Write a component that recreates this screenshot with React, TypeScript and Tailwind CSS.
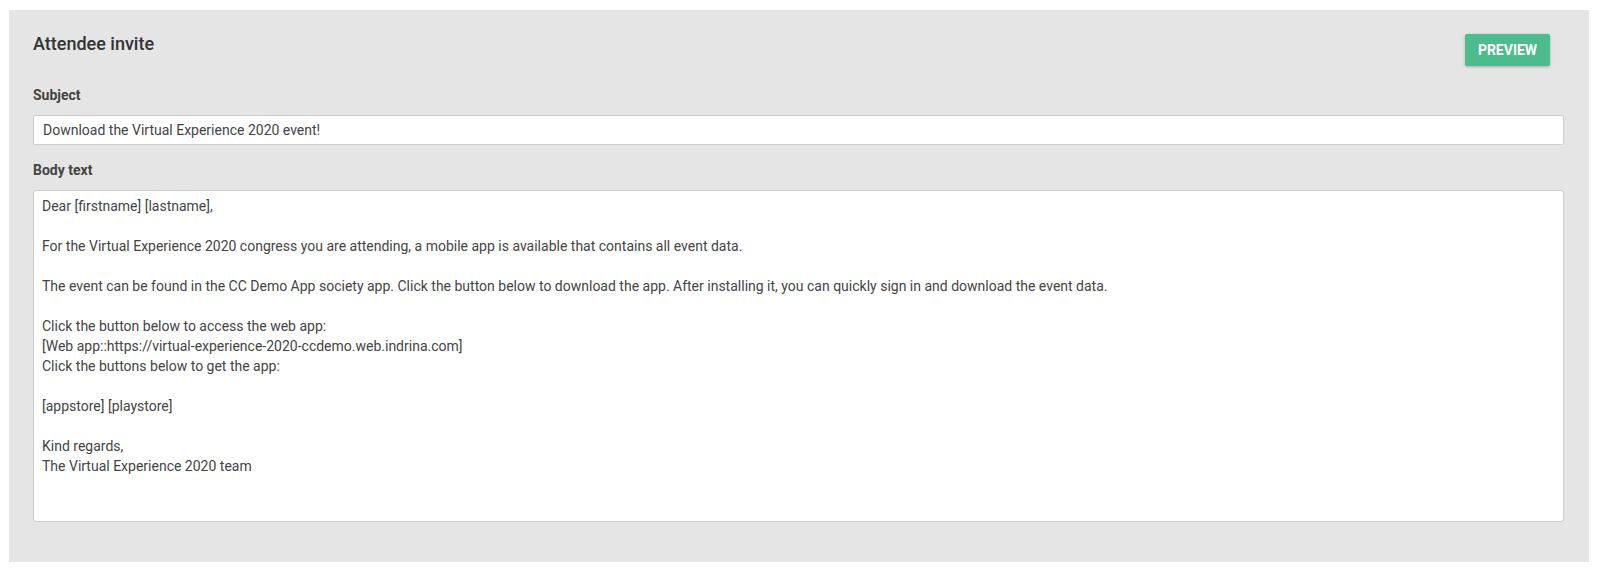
const BODY = `Dear [firstname] [lastname],

For the Virtual Experience 2020 congress you are attending, a mobile app is available that contains all event data.

The event can be found in the CC Demo App society app. Click the button below to download the app. After installing it, you can quickly sign in and download the event data.

Click the button below to access the web app:
[Web app::https://virtual-experience-2020-ccdemo.web.indrina.com]
Click the buttons below to get the app:

[appstore] [playstore]

Kind regards,
The Virtual Experience 2020 team`;

export default function App() {
  return (
    <div className="min-h-[572px] bg-white pt-[10px] pl-[9px] pr-[8px] font-['Roboto',sans-serif] text-[#444]">
      <div className="bg-[#e5e5e5] pl-[24px] pr-[25px] pt-[22px] pb-[40px]">
        {/* Header */}
        <div className="flex items-start justify-between">
          <h2 className="text-[18px] leading-[24px] font-medium text-[#333]">Attendee invite</h2>
          <button className="mt-[2px] mr-[14px] h-[32px] w-[85px] rounded-[2px] bg-[#4cbb8d] text-[14px] font-bold text-white shadow-[0_1px_3px_rgba(0,0,0,0.25)]">
            PREVIEW
          </button>
        </div>

        {/* Subject */}
        <label className="mt-[19px] block text-[14px] leading-[20px] font-bold text-[#444]">Subject</label>
        <input
          readOnly
          value="Download the Virtual Experience 2020 event!"
          className="mt-[10px] block h-[30px] w-full rounded-[2px] border border-[#cccccc] bg-white px-[9px] text-[14px] text-[#444] outline-none"
        />

        {/* Body */}
        <label className="mt-[15px] block text-[14px] leading-[20px] font-bold text-[#444]">Body text</label>
        <textarea
          readOnly
          value={BODY}
          className="mt-[10px] block h-[332px] w-full resize-none rounded-[3px] border border-[#cccccc] bg-white px-[8px] py-[5px] text-[14px] leading-[20px] text-[#444] outline-none"
        />
      </div>
    </div>
  );
}
